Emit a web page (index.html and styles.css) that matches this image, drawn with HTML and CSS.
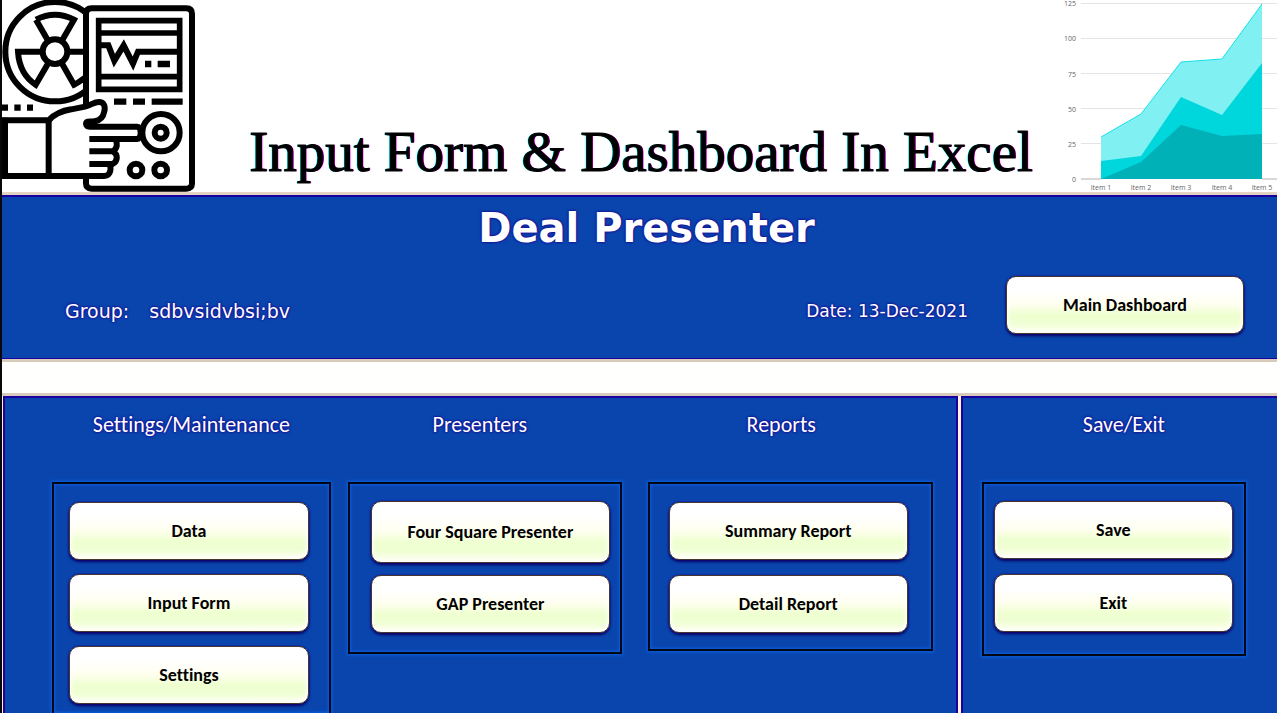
FILE: index.html
```html
<!DOCTYPE html>
<html lang="en">
<head>
<meta charset="utf-8">
<title>Deal Presenter</title>
<link rel="stylesheet" href="styles.css">
</head>
<body>
<header class="banner">
  <svg class="device" viewBox="6 0 594 576" aria-hidden="true" fill="none" stroke="#000" stroke-width="18">
    <circle cx="165" cy="155" r="149"/>
    <path d="M108 59Q165 29 222 59L187 120M108 59L143 120M126 155H54Q58 222 107 254L145 189M204 155H276M185 189L222 254Q252 240 276 212"/>
    <circle cx="165" cy="155" r="37"/>
    <path fill="#fff" stroke="none" d="M258 25H576V566H258Z"/>
    <path d="M258 330V42Q258 25 275 25H559Q576 25 576 42V550Q576 566 559 566H275Q258 566 258 550V528"/>
    <path d="M296 62H539V268H296ZM296 99H539M296 230H539" stroke-width="17"/>
    <path d="M300 136H325L343 182L371 136L399 191L414 155H539"/>
    <path d="M435 192H454M473 192H510M342 305H379M399 305H435M455 305H548M6 323H24M43 323H62M81 323H99" stroke-width="19"/>
    <circle cx="483" cy="398" r="56"/>
    <circle cx="482" cy="398" r="18"/>
    <circle cx="408" cy="510" r="19"/>
    <circle cx="482" cy="510" r="19"/>
    <path fill="#fff" stroke="none" d="M6 361H146C162 344 181 333 214 328L255 320C277 315 280 306 297 306C311 306 317 318 313 334C310 351 299 362 284 364C266 366 258 362 258 371Q259 380 269 380H411Q422 381 422 398Q422 416 411 417H350Q355 440 338 454Q358 470 339 492H326Q336 528 310 528H6Z"/>
    <path d="M6 361H146C162 344 181 333 214 328L255 320C277 315 280 306 297 306C311 306 317 318 313 334C310 351 299 362 284 364C266 366 258 362 258 371Q259 380 269 380H411Q422 381 422 398Q422 416 411 417H268"/>
    <path d="M346 417C354 432 352 446 338 454C355 463 354 483 338 492H268M268 454H338M330 492C335 514 328 528 312 528H6M146 361V528M15 353V536"/>
  </svg>
  <h1 class="banner-title">Input Form &amp; Dashboard In Excel</h1>
  <svg class="chart" viewBox="0 0 237 192" role="img" aria-label="Area chart">
    <path class="grid-line" d="M41 3.5H237M41 38.5H237M41 73.5H237M41 108.5H237M41 143.5H237"/>
    <path fill="#80f0f3" d="M61 137L101 114L141 62L182 59L222 4V179H61Z"/>
    <path fill="#00d7dd" d="M61 161L101 156L141 97L182 115L222 63V179H61Z"/>
    <path fill="#00b1b8" d="M61 179L101 162L141 125L182 136L222 134V179Z"/>
    <path fill="none" stroke="#15e2e7" d="M61 137L101 114L141 62L182 59L222 4"/>
    <path stroke="#d8d8d8" stroke-width="2" d="M41 179H61M222 179H237"/>
    <g class="axis axis-y">
      <text x="36" y="6">125</text><text x="36" y="41">100</text><text x="36" y="77">75</text><text x="36" y="112">50</text><text x="36" y="147">25</text><text x="36" y="182">0</text>
    </g>
    <g class="axis axis-x">
      <text x="61" y="190">Item 1</text><text x="101" y="190">Item 2</text><text x="141" y="190">Item 3</text><text x="182" y="190">Item 4</text><text x="222" y="190">Item 5</text>
    </g>
  </svg>
</header>
<section class="summary">
  <h2 class="summary-title">Deal Presenter</h2>
  <div class="summary-row">
    <p class="group"><span>Group:</span><span>sdbvsidvbsi;bv</span></p>
    <p class="date">Date: 13-Dec-2021</p>
    <button class="btn" type="button">Main Dashboard</button>
  </div>
</section>
<main class="panels">
  <div class="panel panel-main">
    <section class="menu menu-settings">
      <h3>Settings/Maintenance</h3>
      <div class="box">
        <button class="btn" type="button">Data</button>
        <button class="btn" type="button">Input Form</button>
        <button class="btn" type="button">Settings</button>
      </div>
    </section>
    <section class="menu menu-presenters">
      <h3>Presenters</h3>
      <div class="box">
        <button class="btn btn-tall" type="button">Four Square Presenter</button>
        <button class="btn" type="button">GAP Presenter</button>
      </div>
    </section>
    <section class="menu menu-reports">
      <h3>Reports</h3>
      <div class="box">
        <button class="btn" type="button">Summary Report</button>
        <button class="btn" type="button">Detail Report</button>
      </div>
    </section>
  </div>
  <div class="panel panel-exit">
    <section class="menu menu-exit">
      <h3>Save/Exit</h3>
      <div class="box">
        <button class="btn" type="button">Save</button>
        <button class="btn" type="button">Exit</button>
      </div>
    </section>
  </div>
</main>
</body>
</html>
```
FILE: styles.css
```css
* { box-sizing: border-box; }

body {
  margin: 0;
  min-height: 100vh;
  display: flex;
  flex-direction: column;
  border-left: 2px solid #080808;
  background: #fffffe;
  color: #fff;
  font-family: Carlito, Lato, sans-serif;
  font-variant-ligatures: none;
}

h1, h2, h3, p { margin: 0; }

.banner {
  display: flex;
  justify-content: space-between;
  background: #fff;
}
.device { width: 198px; height: 192px; flex: none; }
.banner-title {
  padding-top: 122px;
  padding-left: 42px;
  color: #000;
  font: 400 57px/60px "Liberation Serif", serif;
  white-space: nowrap;
  -webkit-text-stroke: 1px #000;
  text-shadow: -1px 0 #0ff, 1px 0 #f0f;
}
.chart { width: 237px; height: 192px; flex: none; }
.grid-line { stroke: #e4e4e4; }
.axis { fill: #666; font: 7px "Open Sans", sans-serif; }
.axis-y { text-anchor: end; }
.axis-x { text-anchor: middle; }

.summary {
  padding: 13px 33px 25px 63px;
  background: #0a45ad;
  border-top: 3px solid #e3d5c1;
  border-bottom: 3px solid #d9cbb9;
  box-shadow: inset 0 2px #1a00a0, inset 0 -1px #1a00a0;
  text-shadow: 0 0 2px #1a0090, 0 0 3px #1a0090;
}
.summary-title {
  margin-right: 16px;
  text-align: center;
  font: 700 40px/40px "DejaVu Sans", sans-serif;
}
.summary-row {
  display: flex;
  align-items: center;
  padding-top: 28px;
  font: 19px/24px "DejaVu Sans", sans-serif;
}
.group { display: flex; gap: 20px; padding-top: 12px; }
.date { margin-left: auto; margin-right: 38px; padding-top: 12px; font-size: 17px; }
.summary .btn { width: 238px; }

.btn {
  display: block;
  width: 100%;
  height: 58px;
  padding: 0;
  border: 1px solid #47372f;
  border-radius: 10px;
  background: linear-gradient(#fff 25%, #fffff0 48%, #eeffd0 68%, #efffd3 82%, #fffff4);
  box-shadow: inset 0 0 4px 1px #fff, 0 0 2px #1c00a0, 0 2px 3px #08005c;
  color: #000;
  font: 700 18px/20px Carlito, Lato, sans-serif;
  font-variant-ligatures: none;
}
.btn-tall { height: 62px; }

.panels {
  flex: 1;
  display: grid;
  grid-template-columns: 955fr 319fr;
  margin-top: 31px;
  border-top: 3px solid #d9cbb9;
}
.panel { background: #0a45ad; }
.panel-main {
  display: grid;
  grid-template-columns: 279fr 17fr 274fr 26fr 285fr;
  padding: 0 25px 0 49px;
  border-left: 1px solid #fff3d0;
  box-shadow: inset 2px 2px #1a00a0, inset -2px 0 #1a00a0;
}
.panel-exit {
  display: grid;
  padding: 0 31px 0 21px;
  border-left: 3px solid #fff3d5;
  box-shadow: inset 2px 2px #1a00a0;
}
.menu { display: flex; flex-direction: column; }
.menu-presenters { grid-column: 3; }
.menu-reports { grid-column: 5; }
.menu h3 {
  padding: 16px 0 44px;
  text-align: center;
  font: 400 22px/26px Carlito, Lato, sans-serif;
  font-variant-ligatures: none;
  text-shadow: 0 0 2px #1a0090, 0 0 3px #1a0090;
}
.box {
  display: flex;
  flex-direction: column;
  gap: 15px;
  border: 2px solid #000614;
  box-shadow: 0 0 3px 1px #0b5fe0, inset 0 0 3px 1px #0b5fe0;
}
.menu-settings .box { flex: 1; padding: 18px 20px 0 15px; gap: 14px; border-bottom: 0; }
.menu-presenters .box { gap: 12px; padding: 17px 10px 19px 21px; }
.menu-reports .box { padding: 18px 23px 16px 19px; }
.menu-exit .box { padding: 17px 11px 22px 10px; }
.menu-presenters h3 { padding-right: 10px; }
.menu-reports h3 { padding-right: 18px; }
.menu-exit h3 { padding-left: 20px; }
```
